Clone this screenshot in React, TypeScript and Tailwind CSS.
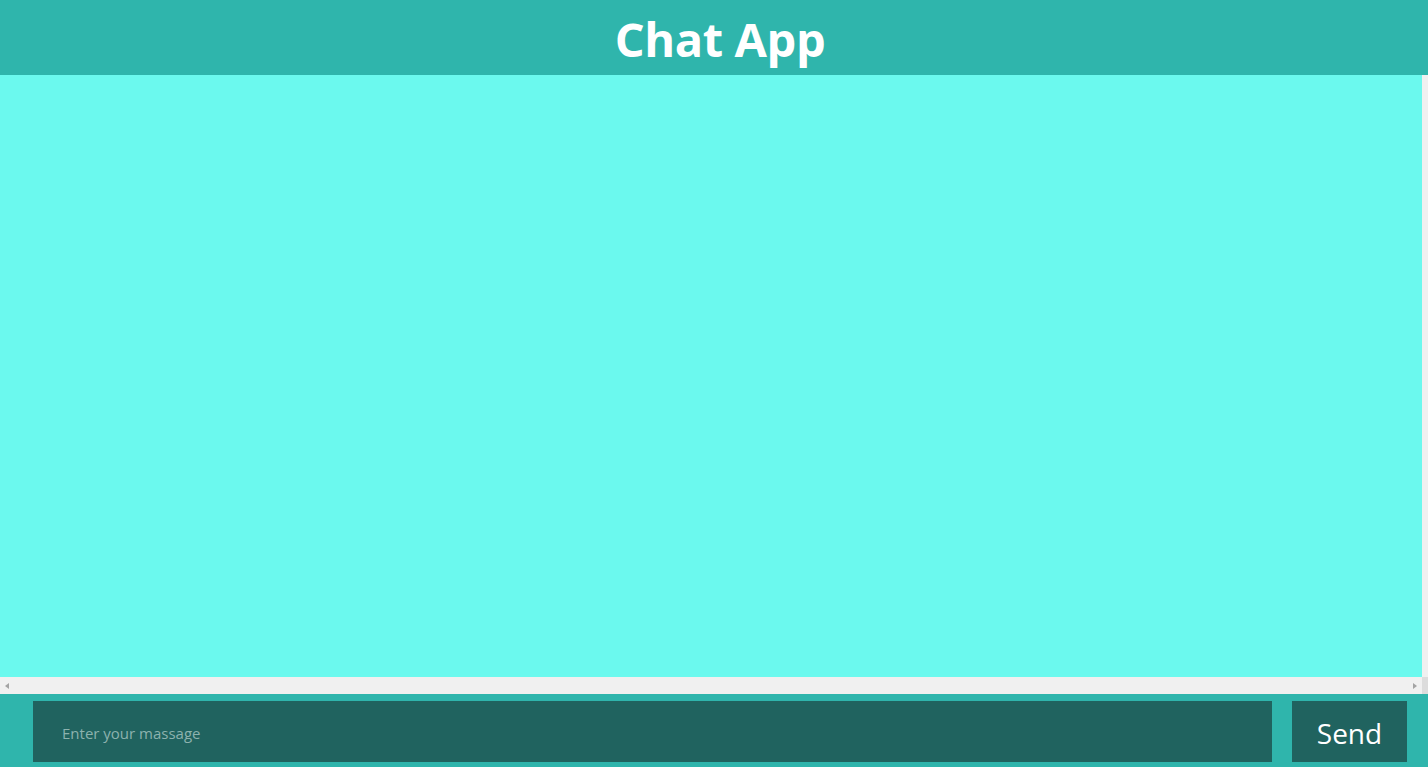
import React from 'react';

export default function App() {
  return (
    <div className="flex h-[767px] w-[1428px] flex-col overflow-hidden bg-[#2fb5ac] font-['Open_Sans',sans-serif]">
      {/* header */}
      <header className="flex h-[75px] shrink-0 items-center justify-center bg-[#2fb5ac] pt-[4px] pl-[12px]">
        <h1 className="text-[47px] font-bold leading-none text-white tracking-[-0.4px]">Chat App</h1>
      </header>

      {/* messages area with scrollbars */}
      <div className="flex h-[619px] shrink-0 flex-col">
        <div className="flex flex-1">
          <div className="flex-1 bg-[#6bf9ee]"></div>
          <div className="w-[6px] bg-[#f0f0f0]"></div>
        </div>
        <div className="flex h-[17px]">
          <div className="flex flex-1 items-center justify-between bg-[#f0f0f0] px-[5px]">
            <span className="h-0 w-0 border-y-[3.5px] border-r-[4px] border-y-transparent border-r-[#a3a3a3]"></span>
            <span className="h-0 w-0 border-y-[3.5px] border-l-[4px] border-y-transparent border-l-[#a3a3a3]"></span>
          </div>
          <div className="w-[6px] bg-[#dcdcdc]"></div>
        </div>
      </div>

      {/* input bar */}
      <div className="flex flex-1 items-start gap-[20px] pt-[7px] pl-[33px] pr-[21px]">
        <input
          className="h-[61px] flex-1 bg-[#20635f] px-[29px] pt-[3px] text-[15px] text-white outline-none placeholder:text-[#8cb2ae]"
          placeholder="Enter your massage"
        />
        <button className="h-[61px] w-[115px] bg-[#20635f] pt-[2px] text-[28px] text-white">Send</button>
      </div>
    </div>
  );
}
